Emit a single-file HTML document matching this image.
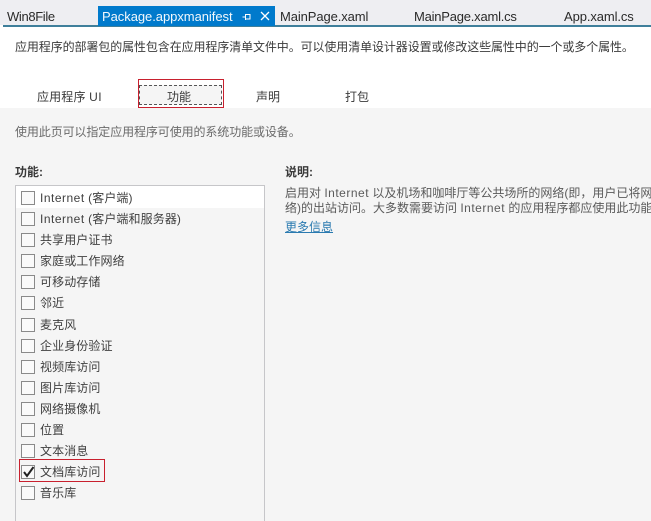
<!DOCTYPE html>
<html lang="zh"><head><meta charset="utf-8"><style>
html,body{margin:0;padding:0;overflow:hidden}
body{width:651px;height:521px;position:relative;overflow:hidden;background:#f5f5f5;font:12px/16px "Liberation Sans","Noto Sans CJK SC",sans-serif;color:#3a3a3a}
div,a,svg{position:absolute;white-space:nowrap}
.t{top:9px;font-size:13px;line-height:16px;color:#2a2a2a;letter-spacing:-.1px}
.cb{left:21px;width:12px;height:12px;border:1px solid #8a8a8a;background:#fafafa}
.l{left:40px;letter-spacing:.1px;color:#3f3f3f}
.i{letter-spacing:.5px}
</style></head><body>
<div style="left:0;top:0;width:651px;height:108px;background:#fff"></div>
<div style="left:0;top:0;width:651px;height:25px;background:#eeeef2"></div>
<div style="left:3px;top:25px;width:648px;height:2px;background:#3f7f9b"></div>
<div style="left:98px;top:6px;width:177px;height:20px;background:#007acc"></div>
<div class="t" style="left:7px;letter-spacing:-.35px">Win8File</div>
<div class="t" style="left:102px;color:#f2f8fc;letter-spacing:-.05px">Package.appxmanifest</div>
<svg style="left:242px;top:12px" width="10" height="10" viewBox="0 0 10 10" fill="none" stroke="#fff"><path d="M.5 5H3.500M3.500 2V8M3.500 2.500H8V7H3.500"/></svg>
<svg style="left:260px;top:11px" width="10" height="10" viewBox="0 0 10 10" fill="none" stroke="#fff" stroke-width="1.300"><path d="M1 1L9 9M9 1L1 9"/></svg>
<div class="t" style="left:280px">MainPage.xaml</div>
<div class="t" style="left:414px;letter-spacing:-.22px">MainPage.xaml.cs</div>
<div class="t" style="left:564px">App.xaml.cs</div>
<div style="left:15px;top:39px;letter-spacing:-.1px">应用程序的部署包的属性包含在应用程序清单文件中。可以使用清单设计器设置或修改这些属性中的一个或多个属性。</div>
<div style="left:37px;top:89px;letter-spacing:.15px">应用程序 <span class="i">UI</span></div>
<div style="left:139px;top:85px;width:83px;height:20px;box-sizing:border-box;border:1px dashed #555;background:#f5f5f5"></div>
<div style="left:138px;top:79px;width:84px;height:27px;border:1px solid #c8202e"></div>
<div style="left:167px;top:89px">功能</div>
<div style="left:256px;top:89px">声明</div>
<div style="left:345px;top:89px">打包</div>
<div style="left:15px;top:124px;color:#6a6a6a;letter-spacing:-.1px">使用此页可以指定应用程序可使用的系统功能或设备。</div>
<div style="left:15px;top:164px;font-weight:bold">功能:</div>
<div style="left:15px;top:185px;width:248px;height:340px;border:1px solid #c6c6c9;background:#f5f5f5"></div>
<div style="left:16px;top:186px;width:248px;height:22px;background:#fff"></div>
<div class="cb" style="top:191px"></div><div class="l" style="top:190px"><span class="i">Internet</span> (客户端)</div>
<div class="cb" style="top:212px"></div><div class="l" style="top:211px"><span class="i">Internet</span> (客户端和服务器)</div>
<div class="cb" style="top:233px"></div><div class="l" style="top:232px">共享用户证书</div>
<div class="cb" style="top:254px"></div><div class="l" style="top:253px">家庭或工作网络</div>
<div class="cb" style="top:275px"></div><div class="l" style="top:274px">可移动存储</div>
<div class="cb" style="top:296px"></div><div class="l" style="top:295px">邻近</div>
<div class="cb" style="top:318px"></div><div class="l" style="top:317px">麦克风</div>
<div class="cb" style="top:339px"></div><div class="l" style="top:338px">企业身份验证</div>
<div class="cb" style="top:360px"></div><div class="l" style="top:359px">视频库访问</div>
<div class="cb" style="top:381px"></div><div class="l" style="top:380px">图片库访问</div>
<div class="cb" style="top:402px"></div><div class="l" style="top:401px">网络摄像机</div>
<div class="cb" style="top:423px"></div><div class="l" style="top:422px">位置</div>
<div class="cb" style="top:444px"></div><div class="l" style="top:443px">文本消息</div>
<div style="left:19px;top:459px;width:84px;height:21px;border:1px solid #c8202e"></div>
<div class="cb" style="top:465px"></div><div class="l" style="top:464px">文档库访问</div>
<svg style="left:22px;top:466px" width="14" height="13" viewBox="0 0 14 13" fill="none" stroke="#222" stroke-width="2"><path d="M2 6L5 10L11.500 1"/></svg>
<div class="cb" style="top:486px"></div><div class="l" style="top:485px">音乐库</div>
<div style="left:285px;top:164px;font-weight:bold">说明:</div>
<div style="left:285px;top:185px;color:#5a5a5a">启用对 <span class="i">Internet</span> 以及机场和咖啡厅等公共场所的网络(即，用户已将网</div>
<div style="left:285px;top:200px;color:#5a5a5a">络)的出站访问。大多数需要访问 <span class="i">Internet</span> 的应用程序都应使用此功能</div>
<div style="left:285px;top:219px;color:#2a7ab0;text-decoration:underline">更多信息</div>
</body></html>
